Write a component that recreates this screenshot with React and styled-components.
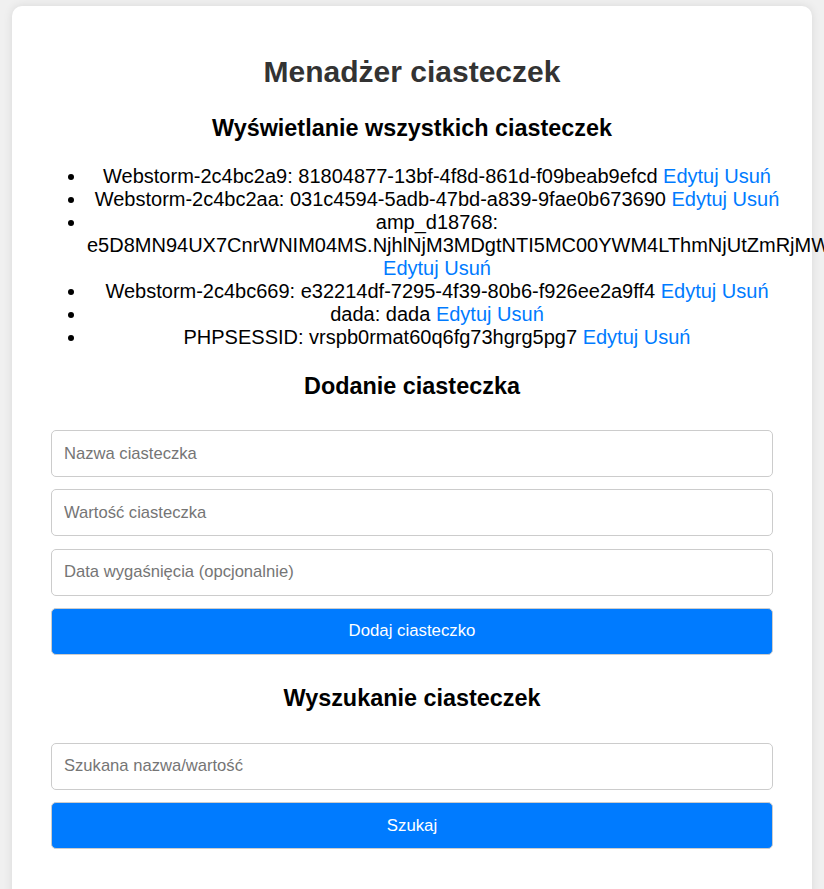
import styled, { createGlobalStyle } from "styled-components";

const cookies = [
    { name: "Webstorm-2c4bc2a9", value: "81804877-13bf-4f8d-861d-f09beab9efcd" },
    { name: "Webstorm-2c4bc2aa", value: "031c4594-5adb-47bd-a839-9fae0b673690" },
    { name: "amp_d18768", value: "e5D8MN94UX7CnrWNIM04MS.NjhlNjM3MDgtNTI5MC00YWM4LThmNjUtZmRjMWQ4ZjY3NzFhMA..1hk2l3b4c.1hk2l3b4c.0.0.0" },
    { name: "Webstorm-2c4bc669", value: "e32214df-7295-4f39-80b6-f926ee2a9ff4" },
    { name: "dada", value: "dada" },
    { name: "PHPSESSID", value: "vrspb0rmat60q6fg73hgrg5pg7" },
];

export default function App() {
    return (
        <>
            <GlobalStyle />
            <Card>
                <Title>Menadżer ciasteczek</Title>

                <SectionTitle $after={23}>Wyświetlanie wszystkich ciasteczek</SectionTitle>
                <CookieList>
                    {cookies.map(({ name, value }) => (
                        <li key={name}>
                            {name}: {value} <Link href="#">Edytuj</Link> <Link href="#">Usuń</Link>
                        </li>
                    ))}
                </CookieList>

                <SectionTitle $after={30}>Dodanie ciasteczka</SectionTitle>
                <Form onSubmit={(e) => e.preventDefault()}>
                    <Input type="text" placeholder="Nazwa ciasteczka" />
                    <Input type="text" placeholder="Wartość ciasteczka" />
                    <Input type="text" placeholder="Data wygaśnięcia (opcjonalnie)" />
                    <Button type="submit">Dodaj ciasteczko</Button>
                </Form>

                <SectionTitle $after={31}>Wyszukanie ciasteczek</SectionTitle>
                <Form onSubmit={(e) => e.preventDefault()}>
                    <Input type="text" placeholder="Szukana nazwa/wartość" />
                    <Button type="submit">Szukaj</Button>
                </Form>
            </Card>
        </>
    );
}

const GlobalStyle = createGlobalStyle`
    html, body {
        overflow-x: hidden;
    }
    body {
        margin: 0;
        background: #f0f0f0;
        font-family: "Liberation Sans", Arial, sans-serif;
        font-size: 20px;
    }
`;

const Card = styled.div`
    box-sizing: border-box;
    width: 800px;
    margin: 6px auto 0;
    padding: 48px 39px 40px;
    background: #ffffff;
    border-radius: 10px;
    box-shadow: 0 0 10px rgba(0, 0, 0, 0.1);
`;

const Title = styled.h1`
    margin: 0 0 25px;
    font-size: 30px;
    line-height: 35px;
    font-weight: bold;
    color: #333333;
    text-align: center;
`;

const SectionTitle = styled.h2`
    margin: 0 0 ${(p) => p.$after}px;
    font-size: 23.4px;
    line-height: 28px;
    font-weight: bold;
    color: #000000;
    text-align: center;
`;

const CookieList = styled.ul`
    margin: 0 -14px 23px 0;
    padding-left: 36px;
    font-size: 20px;
    line-height: 23px;
    color: #000000;
    text-align: center;
`;

const Link = styled.a`
    color: #007bff;
    text-decoration: none;
`;

const Form = styled.form`
    display: flex;
    flex-direction: column;
    gap: 12.34px;
    margin-bottom: 29px;
`;

const Input = styled.input`
    box-sizing: border-box;
    width: 100%;
    height: 47px;
    padding: 0 12px;
    border: 1px solid #cccccc;
    border-radius: 5px;
    font-family: "Liberation Sans", Arial, sans-serif;
    font-size: 16.6px;
    color: #333333;
    outline: none;

    &::placeholder {
        color: #757575;
    }
`;

const Button = styled.button`
    box-sizing: border-box;
    width: 100%;
    height: 47px;
    border: 1px solid #cccccc;
    border-radius: 5px;
    background: #007bff;
    color: #ffffff;
    font-family: "Liberation Sans", Arial, sans-serif;
    font-size: 16.8px;
    cursor: pointer;
`;
